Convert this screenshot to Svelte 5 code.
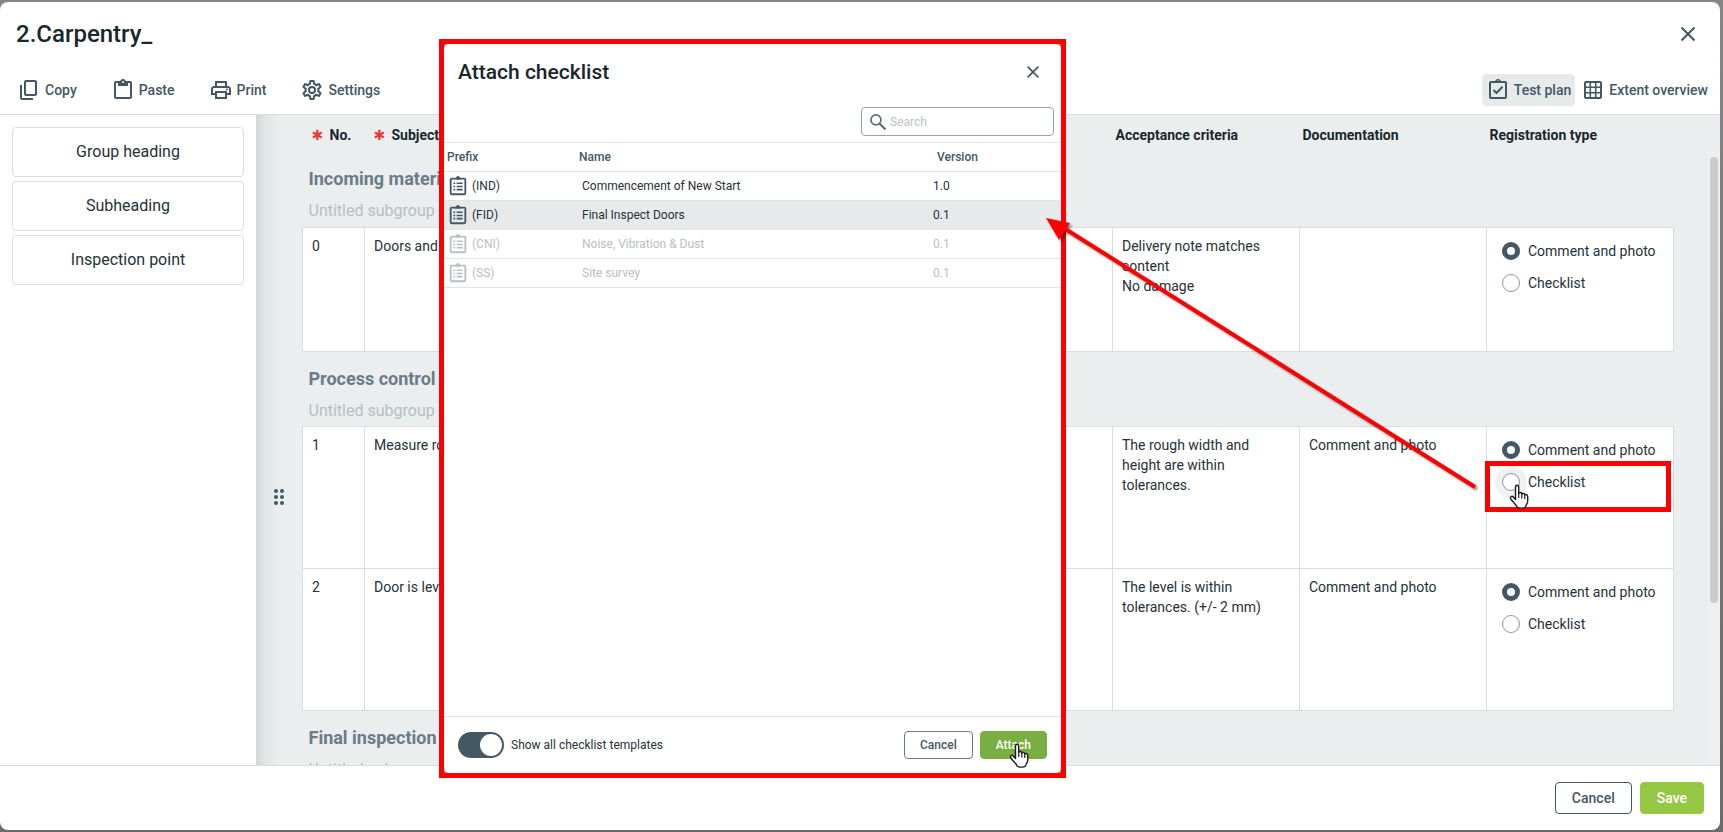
<script>
  const tools = [
    { label: 'Copy', icon: 'copy' },
    { label: 'Paste', icon: 'paste' },
    { label: 'Print', icon: 'print' },
    { label: 'Settings', icon: 'settings' }
  ];

  const blocks = ['Group heading', 'Subheading', 'Inspection point'];

  const groups = [
    {
      title: 'Incoming materials',
      rows: [
        { no: 0, subject: 'Doors and', criteria: 'Delivery note matches content\nNo damage', docs: '', short: true }
      ]
    },
    {
      title: 'Process control',
      rows: [
        { no: 1, subject: 'Measure rough', criteria: 'The rough width and height are within tolerances.', docs: 'Comment and photo', active: true },
        { no: 2, subject: 'Door is level', criteria: 'The level is within tolerances. (+/- 2 mm)', docs: 'Comment and photo' }
      ]
    },
    { title: 'Final inspection', rows: [] }
  ];

  const templates = [
    { prefix: '(IND)', name: 'Commencement of New Start', version: '1.0' },
    { prefix: '(FID)', name: 'Final Inspect Doors', version: '0.1' },
    { prefix: '(CNI)', name: 'Noise, Vibration & Dust', version: '0.1', disabled: true },
    { prefix: '(SS)', name: 'Site survey', version: '0.1', disabled: true }
  ];

  let selected = $state('(FID)');
  let search = $state('');
  let showAll = $state(true);
  let types = $state({ 0: 'comment', 1: 'comment', 2: 'comment' });
</script>

{#snippet icon(name)}
  <svg class="icon" viewBox="0 0 24 24" aria-hidden="true">
    {#if name === 'copy'}
      <rect x="8" y="3" width="11" height="14" rx="1" fill="none" stroke="currentColor" stroke-width="2" />
      <path d="M4 7V19.500Q4 21 5.500 21H16" fill="none" stroke="currentColor" stroke-width="2" />
    {:else if name === 'paste'}
      <path fill-rule="evenodd" d="M19 3h-4.200C14.400 1.800 13.300 1 12 1s-2.400.8-2.800 2H5c-1.100 0-2 .9-2 2v14c0 1.100.9 2 2 2h14c1.100 0 2-.9 2-2V5c0-1.100-.9-2-2-2zM12 3a1 1 0 1 1 0 2 1 1 0 0 1 0-2zM19 19H5V5h2v3h10V5h2z" />
    {:else if name === 'print'}
      <path fill-rule="evenodd" d="M19 8h-1V3H6v5H5c-1.660 0-3 1.340-3 3v6h4v4h12v-4h4v-6c0-1.660-1.340-3-3-3zM8 5h8v3H8V5zm8 12v2H8v-4h8v2zm2-2v-2H6v2H4v-4c0-.55.45-1 1-1h14c.55 0 1 .45 1 1v4h-2z" />
      <circle cx="18" cy="11.500" r="1" />
    {:else if name === 'settings'}
      <path fill-rule="evenodd" d="M12,8A4,4 0 0,1 16,12A4,4 0 0,1 12,16A4,4 0 0,1 8,12A4,4 0 0,1 12,8M12,10A2,2 0 0,0 10,12A2,2 0 0,0 12,14A2,2 0 0,0 14,12A2,2 0 0,0 12,10M10,22C9.75,22 9.54,21.82 9.5,21.58L9.13,18.93C8.5,18.68 7.96,18.34 7.44,17.94L4.95,18.95C4.73,19.03 4.46,18.95 4.34,18.73L2.34,15.27C2.21,15.05 2.27,14.78 2.46,14.63L4.57,12.97L4.5,12L4.57,11L2.46,9.37C2.27,9.22 2.21,8.95 2.34,8.73L4.34,5.27C4.46,5.05 4.73,4.96 4.95,5.05L7.44,6.05C7.96,5.66 8.5,5.32 9.13,5.07L9.5,2.42C9.54,2.18 9.75,2 10,2H14C14.25,2 14.46,2.18 14.5,2.42L14.87,5.07C15.5,5.32 16.04,5.66 16.56,6.05L19.05,5.05C19.27,4.96 19.54,5.05 19.66,5.27L21.66,8.73C21.79,8.95 21.73,9.22 21.54,9.37L19.43,11L19.5,12L19.43,13L21.54,14.63C21.73,14.78 21.79,15.05 21.66,15.27L19.66,18.73C19.54,18.95 19.27,19.04 19.05,18.95L16.56,17.95C16.04,18.34 15.5,18.68 14.87,18.93L14.5,21.58C14.46,21.82 14.25,22 14,22H10M11.25,4L10.88,6.61C9.68,6.86 8.62,7.5 7.85,8.39L5.44,7.35L4.69,8.65L6.8,10.2C6.4,11.37 6.4,12.64 6.8,13.8L4.68,15.36L5.43,16.66L7.86,15.62C8.63,16.5 9.68,17.14 10.87,17.38L11.24,20H12.76L13.13,17.39C14.32,17.14 15.37,16.5 16.14,15.62L18.57,16.66L19.32,15.36L17.2,13.81C17.6,12.64 17.6,11.37 17.2,10.2L19.31,8.65L18.56,7.35L16.15,8.39C15.38,7.5 14.32,6.86 13.12,6.62L12.75,4H11.25Z" />
    {:else if name === 'plan'}
      <rect x="4" y="4" width="16" height="16" rx="1" fill="none" stroke="currentColor" stroke-width="2" />
      <path fill-rule="evenodd" d="M9 4c.2-1.800 1.400-3 3-3s2.800 1.200 3 3zM12 2.200a.8.8 0 1 0 0 1.600.8.8 0 0 0 0-1.600z" />
      <path d="M7.500 12l3 3 6-6.200" fill="none" stroke="currentColor" stroke-width="2" />
    {:else if name === 'grid'}
      <rect x="4" y="4" width="16" height="16" rx="1" fill="none" stroke="currentColor" stroke-width="2" />
      <path d="M9.300 4v16M14.700 4v16M4 9.300h16M4 14.700h16" stroke="currentColor" stroke-width="1.600" />
    {:else if name === 'close'}
      <path d="M5.500 5.500l13 13M18.500 5.500l-13 13" stroke="currentColor" stroke-width="2" />
    {:else if name === 'search'}
      <circle cx="9.500" cy="9.500" r="6" fill="none" stroke="currentColor" stroke-width="2" />
      <path d="M14 14l7 7" stroke="currentColor" stroke-width="2.600" />
    {:else if name === 'list'}
      <rect x="4" y="4" width="16" height="17" rx="1" fill="none" stroke="currentColor" stroke-width="2" />
      <path d="M8 5c1 0 1.400-.6 1.600-1.500C9.900 2 10.800 1 12 1s2.100 1 2.400 2.500C14.600 4.400 15 5 16 5z" />
      <path d="M7 9h2M7 12.500h2M7 16h2M10.500 9H17M10.500 12.500H17M10.500 16H17" stroke="currentColor" stroke-width="1.800" />
    {/if}
  </svg>
{/snippet}

{#snippet hand()}
  <svg class="hand" viewBox="0 0 20 26" aria-hidden="true">
    <path d="M6.500 15.500V3.200C6.500.6 9.700.6 9.700 3.200V9.500C10.300 8 12.600 8.300 12.800 10C13.600 8.800 15.600 9.200 15.800 11C16.800 10 18.700 10.600 18.700 12.500V17C18.700 19.500 17.200 20.500 16.700 22.500C15.500 24.700 9 24.700 7.800 22.500C7 20 3.200 17.500 1.600 14.600C.8 12.600 3 11.600 4.400 13Z" fill="#fff" stroke="#1b1b2a" stroke-width="1.400" stroke-linejoin="round" />
    <path d="M9.700 9.500V14M12.800 10V14.500M15.800 11V15" stroke="#1b1b2a" stroke-width="1.200" />
  </svg>
{/snippet}

<div class="screen">
  <div class="editor">
    <header class="title-bar">
      <h1>2.Carpentry_</h1>
      <button class="close" aria-label="Close">{@render icon('close')}</button>
    </header>

    <nav class="toolbar">
      <div class="tools">
        {#each tools as tool}
          <button class="tool">{@render icon(tool.icon)}{tool.label}</button>
        {/each}
      </div>
      <div class="views">
        <button class="tool current">{@render icon('plan')}Test plan</button>
        <button class="tool">{@render icon('grid')}Extent overview</button>
      </div>
    </nav>

    <div class="body">
      <aside>
        {#each blocks as block}
          <button class="block">{block}</button>
        {/each}
      </aside>

      <main>
        <table class="plan">
          <thead>
            <tr>
              <th class="no required"><span>✱</span>No.</th>
              <th class="required"><span>✱</span>Subject</th>
              <th></th>
              <th></th>
              <th></th>
              <th>Acceptance criteria</th>
              <th>Documentation</th>
              <th>Registration type</th>
            </tr>
          </thead>
          {#each groups as group}
            <tbody>
              <tr class="group">
                <td colspan="8">
                  <h2>{group.title}</h2>
                  <p>Untitled subgroup</p>
                </td>
              </tr>
              {#each group.rows as row}
                <tr class="item" class:short={row.short}>
                  <td>
                    {row.no}
                    {#if row.active}
                      <svg class="drag" viewBox="0 0 10 16" aria-hidden="true">
                        {#each [2, 8, 14] as y}
                          <circle cx="2" cy={y} r="2" />
                          <circle cx="8" cy={y} r="2" />
                        {/each}
                      </svg>
                    {/if}
                  </td>
                  <td>{row.subject}</td>
                  <td></td>
                  <td></td>
                  <td></td>
                  <td class="lines">{row.criteria}</td>
                  <td>{row.docs}</td>
                  <td class="type">
                    <label>
                      <input type="radio" name="type-{row.no}" value="comment" bind:group={types[row.no]} />
                      Comment and photo
                    </label>
                    <label class:hovered={row.active}>
                      <input type="radio" name="type-{row.no}" value="checklist" bind:group={types[row.no]} />
                      Checklist
                    </label>
                    {#if row.active}
                      <div class="mark">{@render hand()}</div>
                    {/if}
                  </td>
                </tr>
              {/each}
            </tbody>
          {/each}
        </table>
        <div class="scrollbar"><div class="thumb"></div></div>
      </main>
    </div>

    <footer class="actions">
      <button class="btn">Cancel</button>
      <button class="btn save">Save</button>
    </footer>
  </div>

  <div class="modal-frame">
    <div class="modal" role="dialog" aria-labelledby="modal-title">
      <header class="modal-head">
        <h2 id="modal-title">Attach checklist</h2>
        <button class="close" aria-label="Close dialog">{@render icon('close')}</button>
      </header>
      <div class="search-row">
        <label class="search">
          {@render icon('search')}
          <input type="text" placeholder="Search" aria-label="Search" bind:value={search} />
        </label>
      </div>
      <div class="modal-body">
        <table class="templates">
          <thead>
            <tr>
              <th class="prefix">Prefix</th>
              <th>Name</th>
              <th class="version">Version</th>
            </tr>
          </thead>
          <tbody>
            {#each templates as item}
              <tr
                class:selected={selected === item.prefix}
                class:disabled={item.disabled}
                onclick={() => !item.disabled && (selected = item.prefix)}
              >
                <td class="key"><span class="with-icon">{@render icon('list')}{item.prefix}</span></td>
                <td>{item.name}</td>
                <td>{item.version}</td>
              </tr>
            {/each}
          </tbody>
        </table>
      </div>
      <footer class="modal-foot">
        <label class="toggle">
          <input type="checkbox" bind:checked={showAll} />
          Show all checklist templates
        </label>
        <button class="btn">Cancel</button>
        <button class="btn attach">Attach{@render hand()}</button>
      </footer>
    </div>
  </div>

  <svg class="arrow" viewBox="0 0 440 280" aria-hidden="true">
    <path d="M18 12L434 274" stroke="#f00" stroke-width="4" />
    <path d="M5 5L29 10L18 27Z" fill="#f00" />
  </svg>
</div>

<style>
  :global(body) {
    margin: 0;
    background: #7f7d7e;
  }

  .screen {
    position: relative;
    box-sizing: border-box;
    height: 100vh;
    padding: 2px 3px 2px 0;
    background: linear-gradient(#868485, #6c6b6c);
    overflow: hidden;
    font-family: Roboto, "Liberation Sans", sans-serif;
    font-size: 14px;
    line-height: 20px;
    color: #263139;
  }

  h1,
  h2,
  p {
    margin: 0;
  }

  button,
  input {
    font: inherit;
    color: inherit;
  }

  button {
    cursor: pointer;
  }

  .icon {
    width: 24px;
    height: 24px;
    flex-shrink: 0;
    fill: currentColor;
  }

  .editor {
    display: flex;
    flex-direction: column;
    height: 100%;
    background: #fff;
    border-radius: 8px;
    overflow: hidden;
  }

  .title-bar {
    display: flex;
    align-items: center;
    justify-content: space-between;
    height: 64px;
    padding: 0 20px 0 16px;
  }

  h1 {
    font-size: 24px;
    line-height: 32px;
    font-weight: 500;
    color: #1a262e;
  }

  .close {
    display: flex;
    padding: 0;
    border: 0;
    background: none;
    color: #435765;
  }

  .toolbar {
    display: flex;
    justify-content: space-between;
    padding: 8px 8px 8px 13px;
    border-bottom: 1px solid #d8dee0;
  }

  .tools {
    display: flex;
    gap: 26px;
  }

  .views {
    display: flex;
    gap: 2px;
  }

  .tool {
    display: flex;
    align-items: center;
    gap: 4px;
    height: 32px;
    padding: 0 4px;
    border: 0;
    border-radius: 4px;
    background: none;
    font-weight: 500;
    color: #435765;
  }

  .tool.current {
    background: #e6eaea;
  }

  .body {
    flex: 1;
    min-height: 0;
    display: flex;
  }

  aside {
    box-sizing: border-box;
    width: 256px;
    padding: 12px;
    display: flex;
    flex-direction: column;
    gap: 4px;
    flex-shrink: 0;
  }

  .block {
    height: 50px;
    border: 1px solid #d8dee0;
    border-radius: 4px;
    background: #fff;
    font-size: 16px;
  }

  main {
    position: relative;
    flex: 1;
    min-width: 0;
    padding: 0 46px;
    overflow: hidden;
    background: linear-gradient(90deg, #d3d8d9, #e0e4e5 8px, #eaeeef 24px, #eaeeef);
  }

  .plan {
    width: 100%;
    border-collapse: collapse;
    table-layout: fixed;
  }

  .plan th {
    height: 37px;
    padding: 3px 3px 0;
    box-sizing: border-box;
    text-align: left;
    font-weight: 700;
    color: #1a262e;
  }

  .plan .no {
    width: 62px;
  }

  .plan .required {
    padding-left: 9px;
    white-space: nowrap;
  }

  .required span {
    display: inline-block;
    width: 18px;
    font-family: "DejaVu Sans", sans-serif;
    line-height: 14px;
    color: #e53935;
  }

  .group td {
    height: 75px;
    box-sizing: border-box;
    padding: 14px 6px 0;
    vertical-align: top;
  }

  .group h2 {
    font-size: 18px;
    line-height: 26px;
    font-weight: 700;
    color: #6b7b88;
  }

  .group p {
    font-size: 16px;
    line-height: 24px;
    padding-top: 7px;
    color: #b5bec4;
  }

  .item td {
    position: relative;
    height: 142px;
    box-sizing: border-box;
    padding: 8px 24px 8px 9px;
    border: 1px solid #d8dee0;
    background: #fff;
    vertical-align: top;
  }

  .item.short td {
    height: 124px;
  }

  .lines {
    white-space: pre-line;
  }

  .drag {
    position: absolute;
    top: 62px;
    left: -29px;
    width: 10px;
    height: 16px;
    fill: #435765;
  }

  .item .type {
    padding: 13px 15px;
  }

  .type label {
    display: flex;
    align-items: center;
    gap: 8px;
    margin-bottom: 12px;
    white-space: nowrap;
  }

  .type input {
    appearance: none;
    box-sizing: border-box;
    width: 18px;
    height: 18px;
    margin: 0;
    border: 1px solid #8a97a1;
    border-radius: 50%;
    background: #fff;
  }

  .type input:checked {
    border: 5px solid #435765;
  }

  .hovered input {
    box-shadow: 0 0 0 7px #f0f1f4;
  }

  .mark {
    position: absolute;
    z-index: 1;
    top: 34px;
    left: -2px;
    right: 2px;
    height: 51px;
    box-sizing: border-box;
    border: 5px solid #f00;
  }

  .hand {
    position: absolute;
    width: 20px;
    height: 26px;
  }

  .mark .hand {
    top: 18px;
    left: 19px;
  }

  .scrollbar {
    position: absolute;
    top: 37px;
    right: 0;
    bottom: 0;
    width: 12px;
    box-sizing: border-box;
    padding: 5px 2px;
    background: #f0eff0;
  }

  .thumb {
    height: 74%;
    border-radius: 4px;
    background: #cccbcc;
  }

  .actions {
    display: flex;
    gap: 8px;
    justify-content: flex-end;
    padding: 16px;
    border-top: 1px solid #d8dee0;
  }

  .btn {
    position: relative;
    height: 32px;
    padding: 0 16px;
    border: 1px solid #435765;
    border-radius: 4px;
    background: #fff;
    font-weight: 500;
    color: #435765;
  }

  .save {
    border-color: #94c845;
    background: #94c845;
    color: #fff;
  }

  .modal-frame {
    position: absolute;
    top: 39px;
    left: 439px;
    bottom: 54px;
    width: 627px;
    box-sizing: border-box;
    border: 5px solid #f00;
    background: #84898d;
  }

  .modal {
    display: flex;
    flex-direction: column;
    height: 100%;
    border-radius: 5px;
    background: #fff;
    overflow: hidden;
    font-size: 12px;
  }

  .modal-head {
    display: flex;
    align-items: center;
    justify-content: space-between;
    height: 56px;
    padding: 0 18px 0 14px;
  }

  .modal-head h2 {
    font-size: 21px;
    line-height: 28px;
    font-weight: 500;
    color: #1a262e;
  }

  .modal-head .icon {
    width: 20px;
    height: 20px;
  }

  .search-row {
    display: flex;
    justify-content: flex-end;
    padding: 7px 7px 6px;
    border-bottom: 1px solid #e2e6e8;
  }

  .search {
    display: flex;
    align-items: center;
    gap: 2px;
    box-sizing: border-box;
    width: 193px;
    height: 29px;
    padding: 0 6px;
    border: 1px solid #98a4ad;
    border-radius: 4px;
    color: #5d6f7b;
  }

  .search .icon {
    width: 20px;
    height: 20px;
  }

  .search input {
    min-width: 0;
    flex: 1;
    padding: 0;
    border: 0;
    outline: 0;
    background: none;
  }

  .search input::placeholder {
    color: #b9c1c7;
    opacity: 1;
  }

  .modal-body {
    flex: 1;
    min-height: 0;
  }

  .templates {
    width: 100%;
    border-collapse: collapse;
    table-layout: fixed;
  }

  .templates th,
  .templates td {
    height: 29px;
    box-sizing: border-box;
    padding: 0 6px;
    border-bottom: 1px solid #dfe4e6;
    text-align: left;
  }

  .templates th {
    height: 28px;
    padding: 0 3px;
    font-weight: 500;
    color: #435765;
  }

  .templates .prefix {
    width: 132px;
  }

  .templates .version {
    width: 134px;
    padding-left: 10px;
  }

  .templates .key {
    padding: 0 3px;
  }

  .with-icon {
    display: flex;
    align-items: center;
    gap: 3px;
  }

  .with-icon .icon {
    width: 22px;
    height: 22px;
    color: #435765;
  }

  .selected td {
    background: #e7eaeb;
  }

  .templates .disabled td,
  .templates .disabled .icon {
    color: #b7c0c6;
  }

  .modal-foot {
    display: flex;
    align-items: center;
    gap: 7px;
    padding: 14px;
    border-top: 1px solid #e2e4e6;
  }

  .modal-foot .btn {
    height: 28px;
    padding: 0 15px;
    border-color: #6b7b88;
  }

  .modal-foot .attach {
    border-color: #79ae42;
    background: #79ae42;
    color: #fff;
  }

  .attach .hand {
    top: 11px;
    left: 28px;
  }

  .toggle {
    display: flex;
    align-items: center;
    gap: 7px;
    margin-right: auto;
  }

  .toggle input {
    appearance: none;
    position: relative;
    width: 46px;
    height: 26px;
    margin: 0;
    border-radius: 13px;
    background: #9aa5ad;
  }

  .toggle input::before {
    content: "";
    position: absolute;
    top: 2px;
    left: 2px;
    width: 22px;
    height: 22px;
    border-radius: 50%;
    background: #fff;
  }

  .toggle input:checked {
    background: #435765;
  }

  .toggle input:checked::before {
    left: 22px;
  }

  .arrow {
    position: absolute;
    top: 213px;
    left: 1041px;
    width: 440px;
    height: 280px;
    pointer-events: none;
    filter: drop-shadow(2px 2px 1px rgba(0, 0, 0, 0.45));
  }
</style>
